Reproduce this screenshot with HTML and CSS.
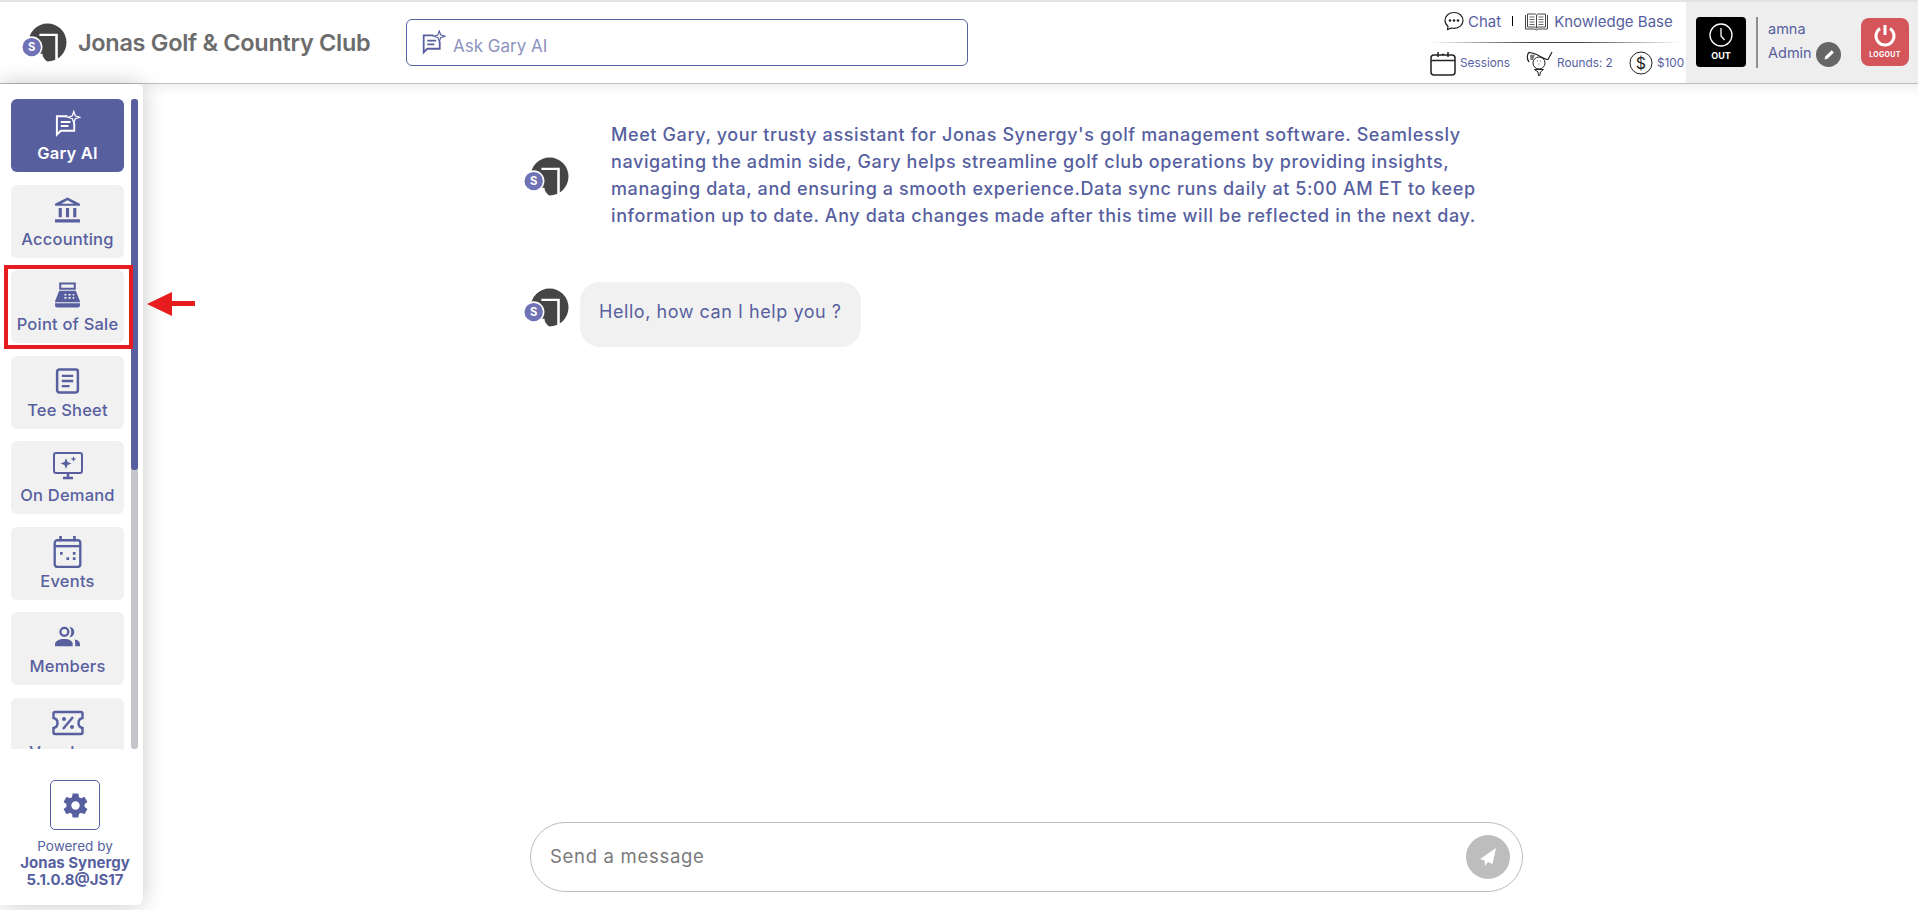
FILE: index.html
```html
<!DOCTYPE html>
<html lang="en">
<head>
<meta charset="utf-8">
<title>Gary AI</title>
<link rel="stylesheet" href="styles.css">
</head>
<body>
<svg class="defs" width="0" height="0" aria-hidden="true">
  <symbol id="logo" viewBox="0 0 44 38">
    <circle cx="25" cy="19" r="18.500" fill="#444544"/>
    <path d="M17 10.500H35V37.500L32.500 38V12.700H17Z" fill="#fff"/>
    <path d="M4 30H20Q20 34 25 38H4Z" fill="#fff"/>
    <circle cx="9.500" cy="23.500" r="10.500" fill="#fff"/>
    <circle cx="9.500" cy="23.500" r="9" fill="#6f72b5"/>
  </symbol>
  <symbol id="spark" viewBox="0 0 28 28">
    <path d="M14 6H3V25L7 21H21V13" fill="none" stroke="currentColor" stroke-width="2"/>
    <path d="M7 12H17M7 16H15" fill="none" stroke="currentColor" stroke-width="2"/>
    <path d="M20.500 1L22 5.500 26.500 7 22 8.500 20.500 13 19 8.500 14.500 7 19 5.500Z" fill="none" stroke="currentColor" stroke-width="1.300"/>
  </symbol>
</svg>

<header class="top">
  <div class="brand">
    <svg class="logo" viewBox="0 0 44 38"><use href="#logo"/><text x="9.500" y="27" text-anchor="middle" class="logo-s">S</text></svg>
    <span class="club">Jonas Golf &amp; Country Club</span>
  </div>
  <div class="ask">
    <svg class="ask-icon"><use href="#spark"/></svg>
    <span>Ask Gary AI</span>
  </div>
  <div class="info">
    <div class="links">
      <svg class="i-chat" viewBox="0 0 20 20"><path d="M10 1.500C5 1.500 1 4.800 1 9.500 1 12 2.200 14 4 15.300L3.500 18.500 7.500 17C8.300 17.300 9.100 17.400 10 17.400 15 17.400 19 14 19 9.500S15 1.500 10 1.500Z" fill="none" stroke="#222" stroke-width="1.200"/><circle cx="6" cy="9.500" r="1.300" fill="#222"/><circle cx="10" cy="9.500" r="1.300" fill="#222"/><circle cx="14" cy="9.500" r="1.300" fill="#222"/></svg>
      <span class="link">Chat</span>
      <span class="pipe"></span>
      <svg class="i-book" viewBox="0 0 24 19"><path d="M1 3V17H10.500L12 18 13.500 17H23V3M3 2V15H10C11 15 11.500 15.500 12 16 12.500 15.500 13 15 14 15H21V2H14C13 2 12.400 2.400 12 3 11.600 2.400 11 2 10 2ZM12 3V16" fill="none" stroke="#444" stroke-width="1"/><path d="M5 5H10M5 7.500H10M5 10H10M5 12.500H10M14 5H19M14 7.500H19M14 10H19M14 12.500H19" stroke="#666" stroke-width="1"/></svg>
      <span class="link">Knowledge Base</span>
    </div>
    <div class="rule"></div>
    <div class="stats">
      <svg class="i-cal" viewBox="0 0 26 25"><rect x="1" y="4" width="24" height="20" rx="3" fill="none" stroke="#222" stroke-width="1.500"/><path d="M1 9.500H25M8 1V6M18 1V6M12 3.500H14" stroke="#222" stroke-width="1.500" fill="none"/></svg>
      <span class="stat s-sessions">Sessions</span>
      <svg class="i-golf" viewBox="0 0 27 25"><path d="M26 1L22 8.500C19 9 14 4.500 8 2.500L3 1.500C1 3 0.500 8 3 11" fill="none" stroke="#222" stroke-width="1.200"/><path d="M4 4L9 3.500 7 9 4.500 9Z" fill="#777"/><circle cx="13" cy="12" r="6" fill="none" stroke="#222" stroke-width="1"/><path d="M8.500 18.500H17.500L14.500 21 13.800 24.500H12.500L12 21Z" fill="none" stroke="#222" stroke-width="1"/><path d="M11 10h1M14 10h1M12.500 13h1" stroke="#555" stroke-width="1"/></svg>
      <span class="stat s-rounds">Rounds: 2</span>
      <svg class="i-dollar" viewBox="0 0 24 24"><circle cx="12" cy="12" r="11" fill="none" stroke="#222" stroke-width="1"/><text x="12" y="17.500" text-anchor="middle" class="dollar">$</text></svg>
      <span class="stat">$100</span>
    </div>
  </div>
  <div class="user">
    <div class="clock">
      <svg viewBox="0 0 24 24"><circle cx="12" cy="12" r="11" fill="none" stroke="#fff" stroke-width="1.300"/><path d="M12 5V13L15.500 17" fill="none" stroke="#fff" stroke-width="1.300"/></svg>
      <span>OUT</span>
    </div>
    <div class="sep"></div>
    <div class="who">
      <span>amna</span>
      <span>Admin</span>
    </div>
    <div class="edit">
      <svg viewBox="0 0 24 24"><path d="M6 18L7 14 15.500 5.500 18.500 8.500 10 17Z" fill="#fff"/></svg>
    </div>
    <div class="logout">
      <svg viewBox="0 0 24 24"><path d="M7 5.500A9 9 0 1 0 17 5.500" fill="none" stroke="#fff" stroke-width="3"/><path d="M12 2V12" stroke="#fff" stroke-width="3"/></svg>
      <span>LOGOUT</span>
    </div>
  </div>
</header>

<div class="body">
  <aside class="side">
    <div class="nav-wrap">
      <nav class="nav">
        <a class="tile active"><svg class="ic"><use href="#spark"/></svg><span>Gary AI</span></a>
        <a class="tile"><svg class="ic" viewBox="0 0 26 26"><path d="M13 1L25 7V9H1V7ZM13 3.500L7 7H19Z" fill="currentColor" fill-rule="evenodd"/><path d="M4.500 11H7.500V20H4.500ZM11.500 11H14.500V20H11.500ZM18.500 11H21.500V20H18.500ZM1 22H25V25H1Z" fill="currentColor"/></svg><span>Accounting</span></a>
        <a class="tile"><svg class="ic" viewBox="0 0 26 26"><path d="M5 1H21V8H5ZM7 3V6H19V3Z" fill="currentColor" fill-rule="evenodd"/><path d="M5 9H21L25 19V23Q25 25 23 25H3Q1 25 1 23V19ZM10 12V13.500H12V12ZM14 12V13.500H16V12ZM18 12V13.500H19.500V12ZM10 15V16.500H12V15ZM14 15V16.500H16V15ZM18 15V16.500H19.500V15ZM1 20V21H25V20Z" fill="currentColor" fill-rule="evenodd"/></svg><span>Point of Sale</span></a>
        <a class="tile"><svg class="ic" viewBox="0 0 26 26"><rect x="3" y="2" width="20" height="22" rx="2" fill="none" stroke="currentColor" stroke-width="2.400"/><path d="M7.500 8H18.500M7.500 13H18.500M7.500 18H15" stroke="currentColor" stroke-width="2.200"/></svg><span>Tee Sheet</span></a>
        <a class="tile"><svg class="ic wide" viewBox="0 0 30 28"><rect x="1" y="1" width="28" height="20" rx="2" fill="none" stroke="currentColor" stroke-width="2"/><path d="M15 21V25M10 26H20" stroke="currentColor" stroke-width="2.500"/><path d="M13 6L14.500 10 18.500 11.500 14.500 13 13 17 11.500 13 7.500 11.500 11.500 10ZM20.500 4L21.300 6.200 23.500 7 21.300 7.800 20.500 10 19.700 7.800 17.500 7 19.700 6.200Z" fill="currentColor"/></svg><span>On Demand</span></a>
        <a class="tile"><svg class="ic tall" viewBox="0 0 26 30"><rect x="1" y="4" width="24" height="25" rx="2.500" fill="none" stroke="currentColor" stroke-width="2.200"/><path d="M1 9.500H25" stroke="currentColor" stroke-width="2.200"/><path d="M6.500 0V5M19.500 0V5" stroke="currentColor" stroke-width="2.500"/><path d="M6 15H8.500V17.500H6ZM18 15H20.500V17.500H18ZM12 20H14.500V22.500H12ZM18 20H20.500V22.500H18Z" fill="currentColor"/></svg><span>Events</span></a>
        <a class="tile"><svg class="ic" viewBox="0 0 26 26"><circle cx="10" cy="8" r="3.800" fill="none" stroke="currentColor" stroke-width="2.200"/><path d="M16 4A4.500 4.500 0 0 1 16 12.500C17.500 10 17.500 6.500 16 4Z" fill="currentColor" stroke="currentColor"/><path d="M1 22V20C1 17 5 15 10 15S18 17 18 20V22ZM20 15.500C23 16 25 17.500 25 20V22H20.500C20.500 19.500 20.500 17.500 20 15.500Z" fill="currentColor"/></svg><span>Members</span></a>
        <a class="tile"><svg class="ic wide" viewBox="0 0 32 26"><path d="M3 2H29Q30.500 2 30.500 3.500V8C28 8.500 26.500 10.500 26.500 13S28 17.500 30.500 18V22.500Q30.500 24 29 24H3Q1.500 24 1.500 22.500V18C4 17.500 5.500 15.500 5.500 13S4 8.500 1.500 8V3.500Q1.500 2 3 2Z" fill="none" stroke="currentColor" stroke-width="2.400"/><path d="M11 19L21 7" stroke="currentColor" stroke-width="2.400"/><circle cx="12" cy="9" r="2" fill="currentColor"/><circle cx="20" cy="17" r="2" fill="currentColor"/></svg><span>Vouchers</span></a>
      </nav>
      <div class="track"><div class="thumb"></div></div>
    </div>
    <div class="foot">
      <div class="gear">
        <svg viewBox="0 0 24 24"><path fill-rule="evenodd" d="M19.430 12.980c.04-.32.070-.64.070-.98s-.03-.66-.07-.98l2.110-1.650a.5.5 0 0 0 .12-.64l-2-3.460a.5.5 0 0 0-.61-.22l-2.490 1a7.300 7.300 0 0 0-1.690-.98l-.38-2.650A.49.49 0 0 0 14 2h-4a.49.49 0 0 0-.49.420l-.38 2.650c-.61.25-1.170.59-1.690.98l-2.490-1a.5.5 0 0 0-.61.220l-2 3.460a.49.49 0 0 0 .12.640l2.110 1.650c-.04.32-.07.650-.07.980s.03.660.07.980l-2.110 1.650a.5.5 0 0 0-.12.640l2 3.460c.12.220.39.300.61.220l2.490-1c.52.400 1.080.730 1.690.980l.38 2.650c.03.240.24.420.49.420h4c.25 0 .46-.18.49-.42l.38-2.650c.61-.25 1.170-.59 1.690-.98l2.490 1c.23.090.49 0 .61-.22l2-3.460a.5.5 0 0 0-.12-.64ZM12 15.500a3.500 3.500 0 1 1 0-7 3.500 3.500 0 0 1 0 7Z" fill="currentColor"/></svg>
      </div>
      <div class="powered">Powered by</div>
      <div class="synergy">Jonas Synergy<br>5.1.0.8@JS17</div>
    </div>
  </aside>

  <main class="main">
    <div class="chat">
      <div class="msg msg-intro">
        <svg class="logo" viewBox="0 0 44 38"><use href="#logo"/><text x="9.500" y="27" text-anchor="middle" class="logo-s">S</text></svg>
        <p class="intro">Meet Gary, your trusty assistant for Jonas Synergy's golf management software. Seamlessly<br>navigating the admin side, Gary helps streamline golf club operations by providing insights,<br>managing data, and ensuring a smooth experience.Data sync runs daily at 5:00 AM ET to keep<br>information up to date. Any data changes made after this time will be reflected in the next day.</p>
      </div>
      <div class="msg msg-hello">
        <svg class="logo" viewBox="0 0 44 38"><use href="#logo"/><text x="9.500" y="27" text-anchor="middle" class="logo-s">S</text></svg>
        <div class="bubble">Hello, how can I help you ?</div>
      </div>
    </div>
    <div class="composer">
      <span>Send a message</span>
      <div class="send">
        <svg viewBox="0 0 24 24"><path d="M20 3L4 14 8.500 15.500 9 21 12 17 16.500 19Z" fill="#fff"/></svg>
      </div>
    </div>
  </main>
</div>

<div class="callout"></div>
<svg class="arrow" viewBox="0 0 48 26"><path d="M0 13L25 1V10H48V15H25V25Z" fill="#e71c1f"/></svg>
</body>
</html>
```

FILE: styles.css
```css
* { box-sizing: border-box; }
html, body { margin: 0; height: 100%; }
body {
  width: 1918px;
  height: 910px;
  overflow: hidden;
  display: flex;
  flex-direction: column;
  font-family: Inter, "Noto Sans", sans-serif;
  color: #575f9f;
  background: #fff;
  border-top: 2px solid #e4e4e4;
  position: relative;
}
.defs { position: absolute; }
.logo-s { font: 700 11px Inter, sans-serif; fill: #fff; }
.dollar { font: 400 16px Inter, sans-serif; fill: #222; }

/* Header */
.top {
  flex: none;
  height: 82px;
  display: flex;
  align-items: stretch;
  background: #fff;
  border-bottom: 1px solid #bdbdbd;
  position: relative;
  z-index: 1;
}
.brand { width: 406px; display: flex; align-items: center; padding: 0 0 0 22px; gap: 11px; }
.logo { width: 45px; height: 39px; display: block; flex: none; }
.club { font-size: 23.500px; font-weight: 600; color: #6c6c6c; letter-spacing: -0.300px; white-space: nowrap; }
.ask {
  width: 562px;
  height: 47px;
  margin-top: 17px;
  display: flex;
  align-items: center;
  gap: 7px;
  padding: 6px 0 0 14px;
  border: 1.500px solid #5a62a0;
  border-radius: 6px;
  font-size: 17px;
  color: #8e93c0;
}
.ask-icon { width: 25px; height: 25px; color: #575f9f; margin-top: -7px; }

.info { flex: 1; display: flex; flex-direction: column; align-items: flex-start; padding: 7px 0 0 462px; position: relative; }
.info svg { display: block; flex: none; }
.links { display: flex; align-items: center; height: 24px; padding-left: 14px; font-size: 15px; }
.i-chat { width: 20px; height: 20px; margin-right: 4px; }
.i-book { width: 25px; height: 19px; margin-right: 5px; }
.pipe { width: 1px; height: 10px; background: #000; margin: 0 11px; }
.link { white-space: nowrap; }
.rule { width: 250px; height: 1px; margin: 9px 0 7px; background: linear-gradient(90deg, transparent, #444 40%, #444 60%, transparent); }
.stats { display: flex; align-items: center; height: 26px; font-size: 11.800px; white-space: nowrap; }
.i-cal { width: 26px; height: 25px; margin-right: 4px; }
.i-golf { width: 27px; height: 25px; margin-right: 4px; }
.i-dollar { width: 24px; height: 24px; margin-right: 4px; }
.s-sessions { margin-right: 16px; width: 50px; }
.s-rounds { margin-right: 16px; width: 56px; }

.user {
  width: 232px;
  flex: none;
  display: flex;
  align-items: flex-start;
  background: #eee;
  padding: 15px 0 0 10px;
}
.clock { width: 50px; height: 50px; background: #000; border-radius: 4px; color: #fff; display: flex; flex-direction: column; align-items: center; padding-top: 6px; font-size: 9px; font-weight: 700; gap: 3px; }
.clock svg { width: 24px; height: 24px; }
.sep { width: 2px; height: 51px; background: #8d8d8d; margin: 0 10px; }
.who { width: 49px; display: flex; flex-direction: column; font-size: 14.500px; gap: 8px; padding-top: 4px; line-height: 16px; }
.edit { width: 25px; height: 25px; border-radius: 50%; background: #666; margin: 25px 0 0 -1px; display: flex; align-items: center; justify-content: center; flex: none; }
.edit svg { width: 18px; height: 18px; }
.logout { width: 48px; height: 48px; margin: 1px 0 0 20px; background: #d4565a; border-radius: 8px; color: #fff; display: flex; flex-direction: column; align-items: center; padding-top: 5px; font-size: 7px; font-weight: 700; letter-spacing: .3px; flex: none; gap: 3px; }
.logout svg { width: 24px; height: 24px; }

/* Body row */
.body { flex: 1; display: flex; min-height: 0; position: relative; }

.side {
  width: 143px;
  height: 821px;
  flex: none;
  background: #fff;
  border-radius: 0 6px 6px 0;
  box-shadow: 0 0 22px rgba(0,0,0,.22);
  display: flex;
  flex-direction: column;
  padding-top: 15px;
  position: relative;
  z-index: 2;
}
.nav-wrap { height: 650px; display: flex; padding-left: 11px; }
.nav { width: 113px; overflow: hidden; display: flex; flex-direction: column; gap: 12.500px; }
.tile {
  flex: none;
  height: 73px;
  background: #f1f1f1;
  border-radius: 6px;
  display: flex;
  flex-direction: column;
  align-items: center;
  padding-top: 11px;
  gap: 5px;
  font-size: 16.500px;
  font-weight: 500;
  color: #575f9f;
  letter-spacing: 0.200px;
  white-space: nowrap;
}
.tile.active { background: #575f9f; color: #fff; font-weight: 600; }
.ic { width: 27px; height: 28px; display: block; flex: none; }
.ic.wide { width: 32px; }
.ic.tall { width: 29px; height: 32px; margin: -2px 0 -2px; }
.track { width: 7px; margin-left: 7px; background: #c5c5cc; border-radius: 3px; }
.thumb { height: 371px; background: #575f9f; border-radius: 3px; }

.foot { flex: 1; display: flex; flex-direction: column; align-items: center; padding: 31px 0 0 7px; }
.gear { width: 50px; height: 50px; border: 1.500px solid #575f9f; border-radius: 5px; display: flex; align-items: center; justify-content: center; margin-bottom: 8px; }
.gear svg { width: 29px; height: 29px; color: #575f9f; }
.powered { font-size: 13.500px; line-height: 17px; }
.synergy { font-size: 15px; font-weight: 700; line-height: 16.500px; text-align: center; white-space: nowrap; }

/* Chat */
.main { flex: 1; display: flex; flex-direction: column; background: linear-gradient(#f3f3f3, #fff 12px); }
.chat { flex: 1; padding: 38px 0 0 381px; display: flex; flex-direction: column; }
.msg { display: flex; }
.msg-intro { height: 108px; align-items: center; }
.msg-hello { margin-top: 52px; align-items: flex-start; }
.msg-hello .logo { margin-top: 6px; }
.intro { margin: -3px 0 0 42px; font-size: 18px; font-weight: 500; line-height: 27px; letter-spacing: 0.600px; white-space: nowrap; }
.bubble { margin-left: 11px; height: 65px; padding: 0 19px 6px; display: flex; align-items: center; background: #f1f1f1; border-radius: 20px; font-size: 18px; letter-spacing: 0.550px; }
.composer {
  flex: none;
  width: 993px;
  height: 70px;
  margin: 0 0 18px 387px;
  display: flex;
  align-items: center;
  justify-content: space-between;
  padding: 0 12px 0 19px;
  border: 1px solid #bdbdbd;
  border-radius: 35px;
  font-size: 18.500px;
  letter-spacing: 0.700px;
  color: #7a7a7a;
}
.composer span { margin-top: -2px; }
.send { width: 44px; height: 44px; border-radius: 50%; background: #bdbdbd; display: flex; align-items: center; justify-content: center; }
.send svg { width: 24px; height: 24px; }

/* Annotation */
.callout { position: absolute; left: 4px; top: 263px; width: 129px; height: 84px; border: 4px solid #e71c1f; z-index: 3; }
.arrow { position: absolute; left: 147px; top: 289px; width: 48px; height: 26px; z-index: 3; }
```
